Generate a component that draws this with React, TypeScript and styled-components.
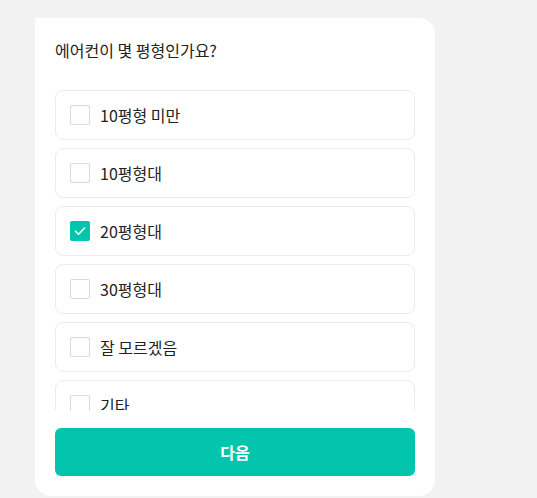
import React, { useState } from "react";
import styled, { createGlobalStyle } from "styled-components";

const GlobalStyle = createGlobalStyle`
  html, body {
    margin: 0;
    background: #f2f2f2;
  }
  body {
    padding: 18px 0 0 35px;
    font-family: "Noto Sans CJK KR", "Noto Sans", sans-serif;
    color: #222;
  }
`;

const options = ["10평형 미만", "10평형대", "20평형대", "30평형대", "잘 모르겠음", "기타"];

const App: React.FC = () => {
  const [selected, setSelected] = useState<number>(2);
  return (
    <>
      <GlobalStyle />
      <Card>
        <Title>에어컨이 몇 평형인가요?</Title>
        <List>
          {options.map((label, i) => (
            <Option key={label} onClick={() => setSelected(i)}>
              <Box checked={selected === i}>
                {selected === i && (
                  <svg width="14" height="14" viewBox="0 0 14 14" fill="none">
                    <path d="M2.5 7.2L5.6 10.2L11.5 4" stroke="#fff" strokeWidth="1.6" strokeLinecap="round" strokeLinejoin="round" />
                  </svg>
                )}
              </Box>
              <Label>{label}</Label>
            </Option>
          ))}
        </List>
        <NextButton>다음</NextButton>
      </Card>
    </>
  );
};

export default App;

const Card = styled.div`
  width: 400px;
  height: 478px;
  box-sizing: border-box;
  background: #fff;
  border-radius: 0 16px 16px 16px;
  padding: 20px;
  display: flex;
  flex-direction: column;
`;

const Title = styled.div`
  font-size: 16px;
  line-height: 24px;
  color: #222;
`;

const List = styled.div`
  margin-top: 28px;
  height: 320px;
  overflow: hidden;
  display: flex;
  flex-direction: column;
  gap: 8px;
`;

const Option = styled.div`
  flex: 0 0 auto;
  height: 50px;
  box-sizing: border-box;
  border: 1px solid #ececec;
  border-radius: 8px;
  padding: 0 14px;
  display: flex;
  align-items: center;
  gap: 10px;
  cursor: pointer;
`;

const Box = styled.div<{ checked: boolean }>`
  width: 20px;
  height: 20px;
  box-sizing: border-box;
  border-radius: 2px;
  border: ${(p) => (p.checked ? "none" : "1px solid #d9d9d9")};
  background: ${(p) => (p.checked ? "#03c5ae" : "#fff")};
  display: flex;
  align-items: center;
  justify-content: center;
`;

const Label = styled.span`
  font-size: 16px;
  color: #222;
`;

const NextButton = styled.button`
  margin-top: 18px;
  height: 48px;
  border: none;
  border-radius: 6px;
  background: #03c5ae;
  color: #fff;
  font-family: inherit;
  font-size: 16px;
  font-weight: 700;
  cursor: pointer;
`;
